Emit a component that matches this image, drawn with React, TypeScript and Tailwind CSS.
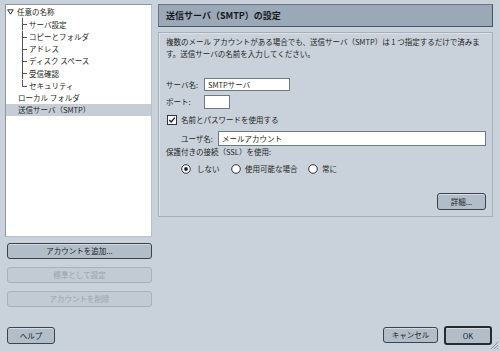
import React from "react";

function Connector({ last }: { last?: boolean }) {
  return (
    <svg width="6" height="12.25" viewBox="0 0 6 12.25" className="shrink-0">
      <line x1="0.5" y1="0" x2="0.5" y2={last ? 6.5 : 12.25} stroke="#555" strokeWidth="1" />
      <line x1="0.5" y1="6.5" x2="5" y2="6.5" stroke="#555" strokeWidth="1" />
    </svg>
  );
}

function Radio({ checked }: { checked?: boolean }) {
  return (
    <svg width="10" height="10" viewBox="0 0 10 10" className="shrink-0">
      <circle cx="5" cy="5" r="4.3" fill="#fbfcfd" stroke="#2e343c" strokeWidth="1" />
      {checked && <circle cx="5" cy="5" r="1.9" fill="#1f242a" />}
    </svg>
  );
}

export default function App() {
  const children = ["サーバ設定", "コピーとフォルダ", "アドレス", "ディスク スペース", "受信確認", "セキュリティ"];
  return (
    <div className="relative w-[500px] h-[351px] bg-[#c9d1da] pt-[4px] px-[5px] font-['Noto_Sans_CJK_JP',sans-serif] text-[#1c1f23] text-[7.5px] leading-none overflow-hidden">
      <div className="flex h-[304px] gap-[6px]">
        {/* Left column */}
        <div className="w-[147px] flex flex-col">
          <div className="h-[233px] bg-white border border-[#8f969e] border-r-[#b9c0c8] border-b-[#b9c0c8] pt-[1px]">
            <div className="h-[12.25px] flex items-center pl-[1px]">
              <svg width="7" height="6" viewBox="0 0 7 6" className="shrink-0">
                <path d="M0.7 0.8 H6.3 L3.5 5.2 Z" fill="none" stroke="#333" strokeWidth="1" />
              </svg>
              <span className="ml-[3px]">任意の名称</span>
            </div>
            {children.map((c, i) => (
              <div key={c} className="h-[12.25px] flex items-center pl-[16px]">
                <Connector last={i === children.length - 1} />
                <span className="ml-[1px]">{c}</span>
              </div>
            ))}
            <div className="h-[12.25px] flex items-center pl-[12px]">ローカル フォルダ</div>
            <div className="h-[12.25px] flex items-center pl-[12px] bg-[#c6cdd6]">送信サーバ（SMTP）</div>
          </div>
          <button className="mt-[6px] ml-[2px] w-[145px] h-[16px] flex items-center justify-center bg-[#b2bdca] border border-[#3a424c] rounded-[3px] shadow-[inset_0_1px_0_#d3dae2]">
            アカウントを追加...
          </button>
          <button className="mt-[8px] ml-[2px] w-[145px] h-[16px] flex items-center justify-center bg-[#c2cad3] border border-[#a9b2bc] rounded-[3px] text-[#9aa3ad]">
            標準として設定
          </button>
          <button className="mt-[8px] ml-[2px] w-[145px] h-[16px] flex items-center justify-center bg-[#c2cad3] border border-[#a9b2bc] rounded-[3px] text-[#9aa3ad]">
            アカウントを削除
          </button>
        </div>

        {/* Right column */}
        <div className="w-[335px] flex flex-col">
          <div className="h-[23px] bg-[#9aa8b7] border border-[#4b5461] border-t-[#6a7482] border-l-[#6a7482] flex items-center pl-[7px] text-[9px] font-bold text-[#15181c]">
            送信サーバ（SMTP）の設定
          </div>
          <div className="mt-[5px] h-[185px] border border-[#a7afb8] shadow-[inset_1px_1px_0_#dde2e8] flex flex-col pl-[7px] pr-[6px] pt-[3px]">
            <div className="leading-[12px]">
              複数のメール アカウントがある場合でも、送信サーバ（SMTP）は 1 つ指定するだけで済みます。送信サーバの名前を入力してください。
            </div>
            <div className="mt-[18px] flex items-center h-[13px]">
              <span className="w-[38px] shrink-0">サーバ名:</span>
              <div className="w-[86px] h-[13px] bg-white border border-[#6f7883] flex items-center pl-[3px]">SMTPサーバ</div>
            </div>
            <div className="mt-[4px] flex items-center h-[14px]">
              <span className="w-[38px] shrink-0">ポート:</span>
              <div className="w-[26px] h-[14px] bg-white border border-[#6f7883]"></div>
            </div>
            <div className="mt-[6px] flex items-center h-[10px] pl-[1px]">
              <svg width="10" height="10" viewBox="0 0 10 10" className="shrink-0">
                <rect x="0.5" y="0.5" width="9" height="9" fill="#f4f6f8" stroke="#2e343c" />
                <path d="M2.3 5 L4.2 7 L7.8 2.6" fill="none" stroke="#1c2025" strokeWidth="1.3" />
              </svg>
              <span className="ml-[4px]">名前とパスワードを使用する</span>
            </div>
            <div className="mt-[6px] flex items-center h-[15px] pl-[15px]">
              <span className="w-[37px] shrink-0">ユーザ名:</span>
              <div className="flex-1 h-[15px] bg-white border border-[#6f7883] flex items-center pl-[3px]">メールアカウント</div>
            </div>
            <div className="h-[12px] flex items-center">保護付きの接続（SSL）を使用:</div>
            <div className="mt-[5px] h-[12px] flex items-center pl-[15px]">
              <Radio checked />
              <span className="ml-[6px] w-[34px]">しない</span>
              <Radio />
              <span className="ml-[4px] w-[63px]">使用可能な場合</span>
              <Radio />
              <span className="ml-[4px]">常に</span>
            </div>
            <div className="mt-[18px] flex justify-end">
              <button className="w-[49px] h-[17px] flex items-center justify-center bg-[#b2bdca] border border-[#3a424c] rounded-[3px] shadow-[inset_0_1px_0_#d3dae2]">
                詳細...
              </button>
            </div>
          </div>
        </div>
      </div>

      {/* Bottom row */}
      <div className="mt-[19px] flex items-start">
        <button className="ml-[2px] w-[48px] h-[17px] flex items-center justify-center bg-[#b2bdca] border border-[#3a424c] rounded-[3px] shadow-[inset_0_1px_0_#d3dae2]">
          ヘルプ
        </button>
        <div className="flex-1"></div>
        <button className="w-[55px] h-[16px] flex items-center justify-center bg-[#b2bdca] border border-[#3a424c] rounded-[3px] shadow-[inset_0_1px_0_#d3dae2]">
          キャンセル
        </button>
        <button className="ml-[6px] mr-[3px] -mt-[1px] w-[48px] h-[19px] flex items-center justify-center bg-[#b2bdca] border-2 border-[#262b32] rounded-[3px] shadow-[inset_0_1px_0_#d3dae2] font-normal">
          OK
        </button>
      </div>

      <svg width="10" height="10" viewBox="0 0 10 10" className="absolute right-[1px] bottom-[1px]">
        <line x1="9" y1="2" x2="2" y2="9" stroke="#7c858f" strokeWidth="0.8" />
        <line x1="9" y1="5" x2="5" y2="9" stroke="#7c858f" strokeWidth="0.8" />
        <line x1="9" y1="8" x2="8" y2="9" stroke="#7c858f" strokeWidth="0.8" />
      </svg>
    </div>
  );
}
